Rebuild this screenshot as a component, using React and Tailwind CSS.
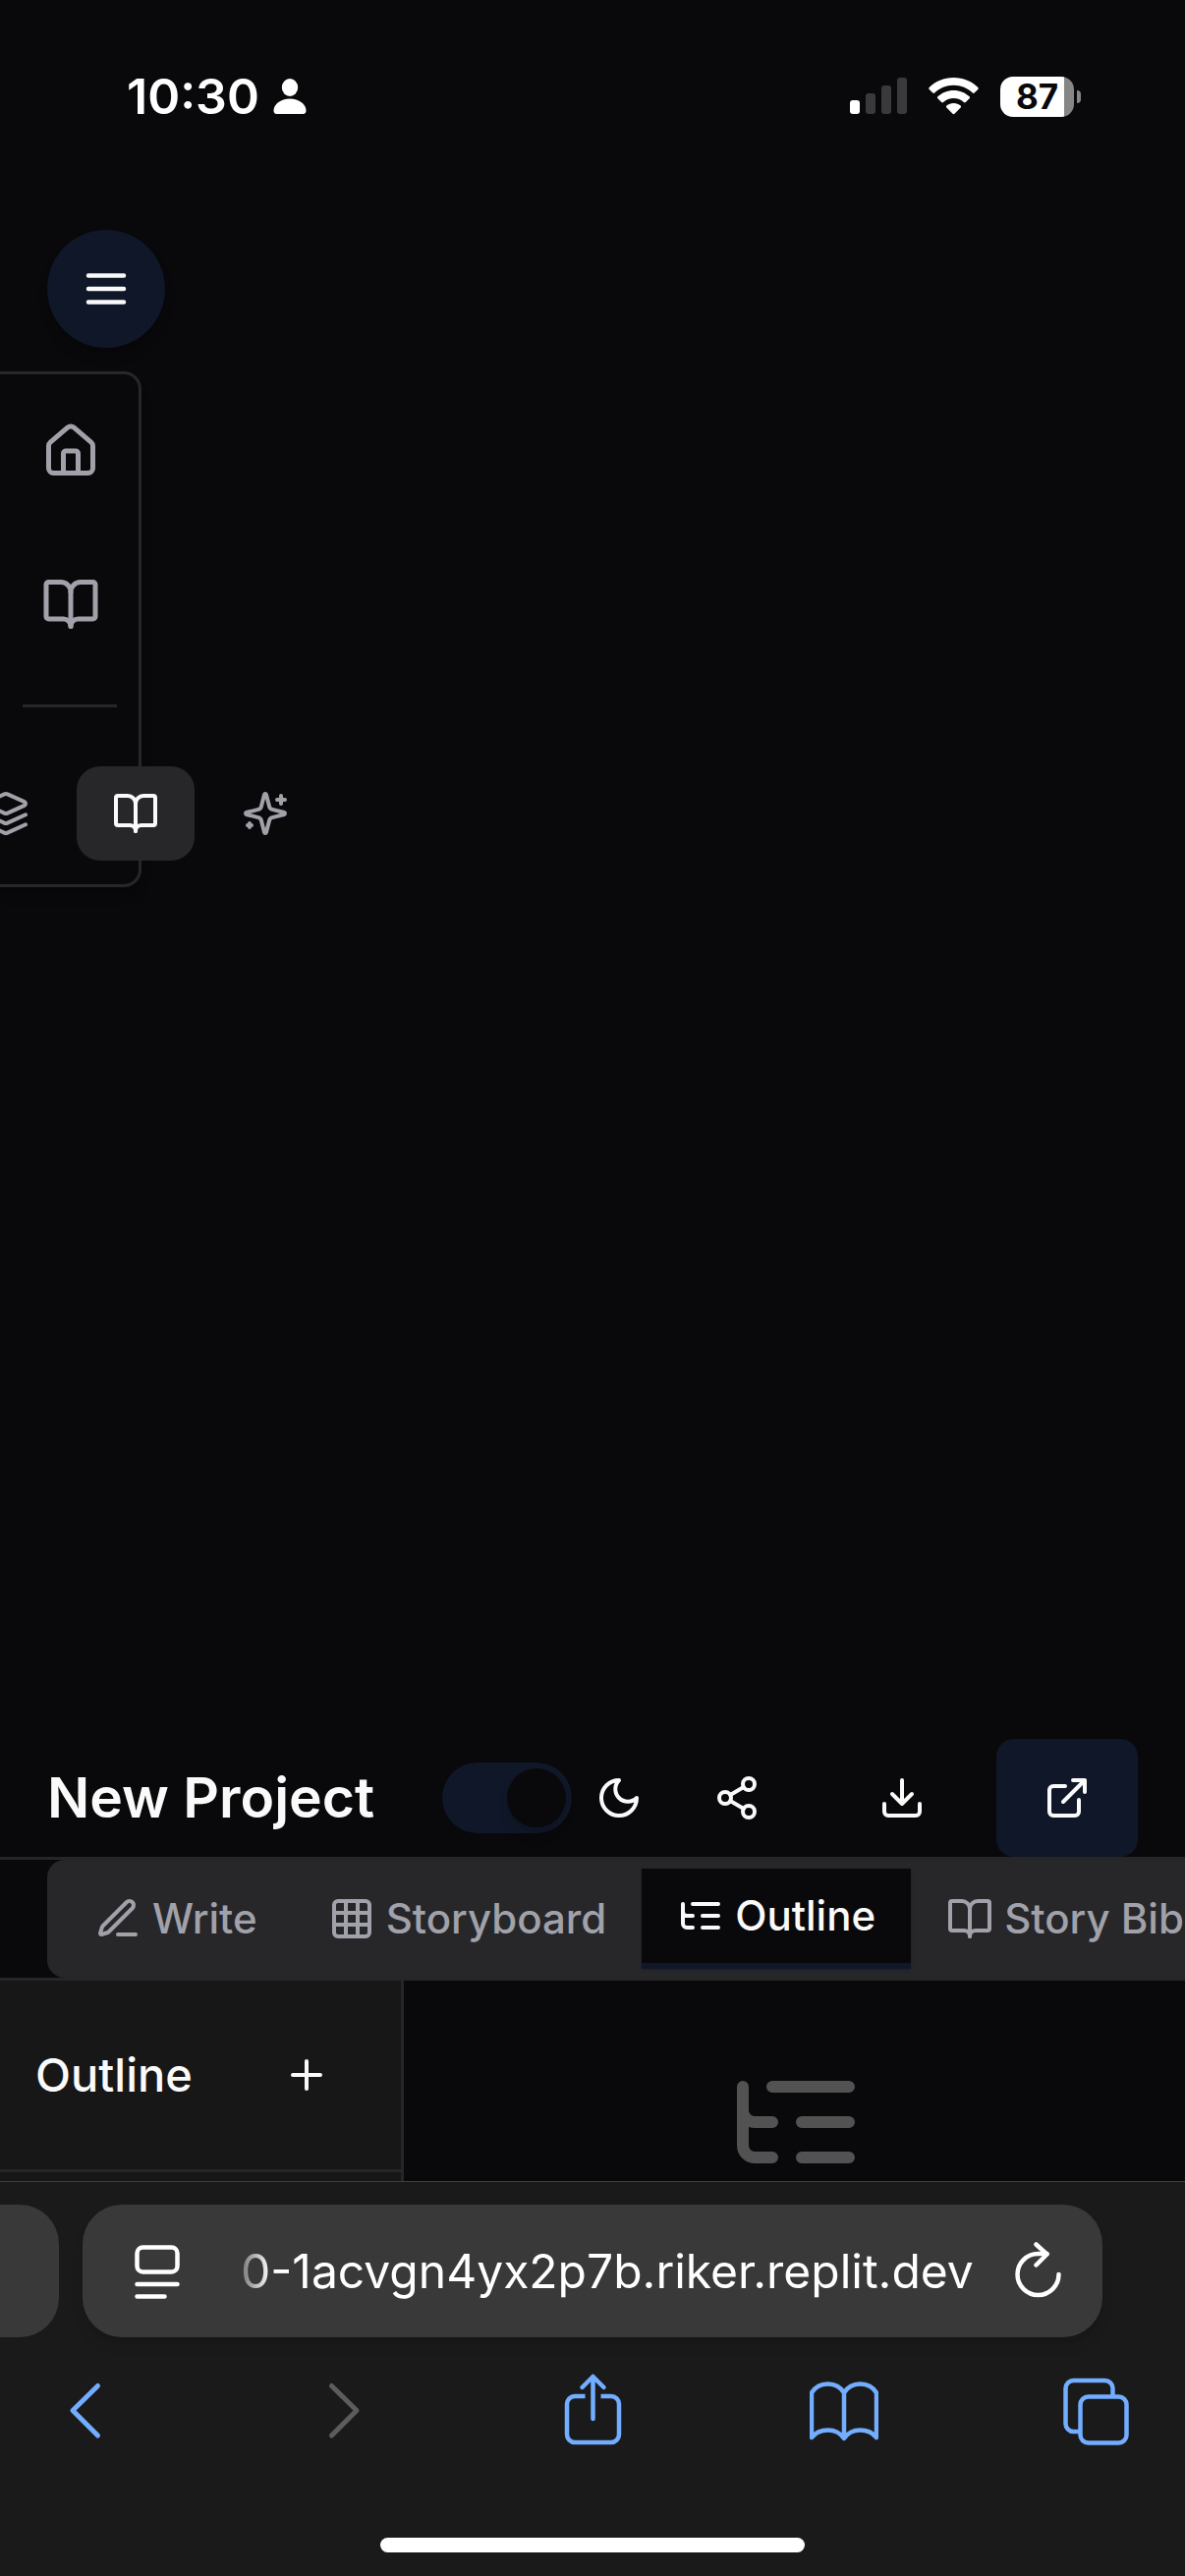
import React from "react";

function Icon({ className, children }) {
  return (
    <svg
      viewBox="0 0 24 24"
      fill="none"
      stroke="currentColor"
      strokeWidth="2"
      strokeLinecap="round"
      strokeLinejoin="round"
      aria-hidden="true"
      className={`shrink-0 ${className}`}
    >
      {children}
    </svg>
  );
}

const BookOpen = ({ className }) => (
  <Icon className={className}>
    <path d="M12 7v14" />
    <path d="M3 18a1 1 0 0 1-1-1V4a1 1 0 0 1 1-1h5a4 4 0 0 1 4 4 4 4 0 0 1 4-4h5a1 1 0 0 1 1 1v13a1 1 0 0 1-1 1h-6a3 3 0 0 0-3 3 3 3 0 0 0-3-3z" />
  </Icon>
);

const ListTree = ({ className }) => (
  <Icon className={className}>
    <path d="M21 12h-8M21 6H8M21 18h-8M3 6v4c0 1.1.9 2 2 2h3M3 10v6c0 1.1.9 2 2 2h3" />
  </Icon>
);

function StatusBar() {
  return (
    <div className="flex h-[196px] items-start justify-between pl-[129px] pr-[106px] pt-[66px]">
      <div className="flex h-16 items-center gap-[14px]">
        <span className="text-[50px] font-semibold leading-[64px] text-white">10:30</span>
        <svg viewBox="0 0 34 36" className="h-9 w-[34px]" fill="#fff" aria-hidden="true">
          <ellipse cx="17" cy="9" rx="8.2" ry="9" />
          <path d="M17 20.5c9.500 0 16.500 6 16.500 12 0 2-1 3.500-3 3.500H3.500c-2 0-3-1.500-3-3.500 0-6 7-12 16.500-12z" />
        </svg>
      </div>
      <div className="flex h-16 items-center gap-[22px]">
        <svg viewBox="0 0 58 38" className="h-[38px] w-[58px]" aria-hidden="true">
          <rect x="0" y="23" width="10" height="14" rx="3" fill="#fff" />
          <rect x="16" y="16" width="10" height="21" rx="3" fill="#3a3a3c" />
          <rect x="32" y="8" width="10" height="29" rx="3" fill="#3a3a3c" />
          <rect x="48" y="0" width="10" height="37" rx="3" fill="#3a3a3c" />
        </svg>
        <svg viewBox="0 0 51 38" className="h-[38px] w-[51px]" fill="#fff" aria-hidden="true">
          <path d="M25.500 0C15.700 0 7 3.800.7 9.900c-.6.600-.6 1.400 0 2l3.600 3.600c.5.500 1.400.5 1.900 0C11.300 10.700 18 7.800 25.500 7.800s14.200 2.900 19.300 7.700c.5.500 1.400.5 1.900 0l3.600-3.600c.6-.6.600-1.400 0-2C44 3.800 35.300 0 25.500 0z" />
          <path d="M25.500 13c-6.200 0-11.900 2.400-16.100 6.300-.6.500-.6 1.400 0 2l3.800 3.700c.5.500 1.300.5 1.900 0 2.800-2.500 6.400-4 10.400-4s7.600 1.500 10.400 4c.6.500 1.400.5 1.900 0l3.800-3.700c.6-.6.600-1.500 0-2C37.400 15.400 31.700 13 25.500 13z" />
          <path d="M25.500 26c-2.700 0-5.200 1-7.100 2.600-.6.500-.6 1.300-.1 1.900l6.200 6.200c.6.600 1.400.6 2 0l6.200-6.200c.5-.6.500-1.400-.1-1.900C30.700 27 28.200 26 25.500 26z" />
        </svg>
        <div className="flex items-center gap-[3px]">
          <div className="flex h-[41px] w-[75px] items-center justify-center rounded-[13px] bg-[linear-gradient(to_right,#fff_65px,#868686_65px)]">
            <span className="text-[35px] font-bold leading-10 text-[#09090b]">87</span>
          </div>
          <div className="h-[13px] w-1 rounded-r-full bg-[#868686]" />
        </div>
      </div>
    </div>
  );
}

function SideDock() {
  return (
    <nav
      aria-label="Project"
      className="flex h-[525px] w-36 flex-col items-start rounded-r-[18px] border-y-[3px] border-r-[3px] border-[#27272a] pt-[18px] shadow-lg"
    >
      <button aria-label="Home" className="flex h-[120px] w-36 items-center justify-center text-[#a1a1aa]">
        <Icon className="size-[60px]">
          <path d="M15 21v-8a1 1 0 0 0-1-1h-4a1 1 0 0 0-1 1v8" />
          <path d="M3 10a2 2 0 0 1 .709-1.528l7-5.999a2 2 0 0 1 2.582 0l7 5.999A2 2 0 0 1 21 10v9a2 2 0 0 1-2 2H5a2 2 0 0 1-2-2z" />
        </Icon>
      </button>
      <button aria-label="Library" className="mt-9 flex h-[120px] w-36 items-center justify-center text-[#a1a1aa]">
        <BookOpen className="size-[60px]" />
      </button>
      <hr className="mt-[42px] w-24 self-center border-t-[3px] border-[#27272a]" />
      <div className="-ml-[54px] mt-[60px] flex gap-3">
        <button aria-label="Layers" className="flex h-24 w-[120px] items-center justify-center rounded-3xl text-[#a1a1aa]">
          <Icon className="size-12">
            <path d="m12.830 2.180a2 2 0 0 0-1.660 0L2.600 6.080a1 1 0 0 0 0 1.830l8.580 3.910a2 2 0 0 0 1.660 0l8.580-3.900a1 1 0 0 0 0-1.830Z" />
            <path d="m22 17.650-9.170 4.160a2 2 0 0 1-1.660 0L2 17.650" />
            <path d="m22 12.650-9.170 4.160a2 2 0 0 1-1.660 0L2 12.650" />
          </Icon>
        </button>
        <button
          aria-label="Story"
          aria-pressed="true"
          className="flex h-24 w-[120px] items-center justify-center rounded-3xl bg-[#27272a] text-[#fafafa]"
        >
          <BookOpen className="size-12" />
        </button>
        <button aria-label="Assistant" className="flex h-24 w-[120px] items-center justify-center rounded-3xl text-[#a1a1aa]">
          <Icon className="size-12">
            <path d="M9.937 15.500A2 2 0 0 0 8.500 14.063l-6.135-1.582a.5.500 0 0 1 0-.962L8.500 9.936A2 2 0 0 0 9.937 8.500l1.582-6.135a.5.500 0 0 1 .963 0L14.063 8.500A2 2 0 0 0 15.500 9.937l6.135 1.581a.5.500 0 0 1 0 .964L15.500 14.063a2 2 0 0 0-1.437 1.437l-1.582 6.135a.5.500 0 0 1-.963 0z" />
            <path d="M20 3v4M22 5h-4M4 17v2M5 18H3" />
          </Icon>
        </button>
      </div>
    </nav>
  );
}

function ProjectHeader() {
  return (
    <header className="flex h-[123px] items-start justify-between border-b-[3px] border-[#262626] px-12">
      <h1 className="flex h-[120px] items-center whitespace-nowrap text-[57px] font-semibold leading-[84px] text-[#fafafa]">
        New Project
      </h1>
      <div className="flex h-[120px] items-center text-[#fafafa]">
        <label className="flex items-center gap-6">
          <input
            type="checkbox"
            role="switch"
            aria-label="Dark mode"
            defaultChecked
            className="flex h-[72px] w-[132px] shrink-0 appearance-none items-center rounded-full bg-[#101728] px-[6px] before:size-[60px] before:rounded-full before:bg-[#09090b] before:shadow-lg before:content-[''] checked:justify-end"
          />
          <Icon className="size-12">
            <path d="M12 3a6 6 0 0 0 9 9 9 9 0 1 1-9-9Z" />
          </Icon>
        </label>
        <button aria-label="Share" className="ml-6 flex h-[120px] w-36 items-center justify-center">
          <Icon className="size-12">
            <circle cx="18" cy="5" r="3" />
            <circle cx="6" cy="12" r="3" />
            <circle cx="18" cy="19" r="3" />
            <path d="m8.590 13.510 6.830 3.980M15.410 6.510l-6.820 3.980" />
          </Icon>
        </button>
        <button aria-label="Download" className="ml-6 flex h-[120px] w-36 items-center justify-center">
          <Icon className="size-12">
            <path d="M21 15v4a2 2 0 0 1-2 2H5a2 2 0 0 1-2-2v-4M7 10l5 5 5-5M12 15V3" />
          </Icon>
        </button>
        <button
          aria-label="Open in new window"
          className="ml-6 flex h-[120px] w-36 items-center justify-center rounded-[18px] bg-[#101728]"
        >
          <Icon className="size-12">
            <path d="M15 3h6v6M10 14 21 3M18 13v6a2 2 0 0 1-2 2H5a2 2 0 0 1-2-2V8a2 2 0 0 1 2-2h6" />
          </Icon>
        </button>
      </div>
    </header>
  );
}

function Tab({ label, active, children }) {
  return (
    <button
      role="tab"
      aria-selected={active ? "true" : "false"}
      className={
        active
          ? "flex h-[102px] shrink-0 items-center gap-[11px] whitespace-nowrap border-b-[6px] border-[#101728] bg-[#09090b] px-9 text-[#fafafa] shadow-sm"
          : "flex h-[102px] shrink-0 items-center gap-[11px] whitespace-nowrap px-9 text-[#a1a1aa]"
      }
    >
      {children}
      <span>{label}</span>
    </button>
  );
}

function Tabs() {
  return (
    <div className="overflow-hidden border-b-[3px] border-[#262626] pl-12">
      <div
        role="tablist"
        className="flex h-[120px] items-center rounded-l-[18px] bg-[#27272a] pl-3 text-[42px] font-medium leading-[60px]"
      >
        <Tab label="Write">
          <Icon className="size-12">
            <path d="M12 20h9" />
            <path d="M16.376 3.622a1 1 0 0 1 3.002 3.002L7.368 18.635a2 2 0 0 1-.855.506l-2.872.838a.5.500 0 0 1-.62-.62l.838-2.872a2 2 0 0 1 .506-.854z" />
          </Icon>
        </Tab>
        <Tab label="Storyboard">
          <Icon className="size-12">
            <rect width="18" height="18" x="3" y="3" rx="2" />
            <path d="M3 9h18M3 15h18M9 3v18M15 3v18" />
          </Icon>
        </Tab>
        <Tab label="Outline" active>
          <ListTree className="size-12" />
        </Tab>
        <Tab label="Story Bible">
          <BookOpen className="size-12" />
        </Tab>
      </div>
    </div>
  );
}

function Workspace() {
  return (
    <div className="flex h-[204px] overflow-hidden">
      <aside className="w-[411px] shrink-0 border-r-[3px] border-[#262626] bg-[#171717]">
        <div className="flex h-[195px] items-center justify-between border-b-[3px] border-[#262626] px-9">
          <h2 className="text-[47px] font-medium leading-[72px] text-[#fafafa]">Outline</h2>
          <button aria-label="Add item" className="flex h-[108px] w-[120px] items-center justify-center text-[#fafafa]">
            <Icon className="size-12">
              <path d="M5 12h14M12 5v14" />
            </Icon>
          </button>
        </div>
      </aside>
      <main className="flex flex-1 justify-center pl-[3px] pt-[72px] text-[#525252]">
        <ListTree className="size-36" />
      </main>
    </div>
  );
}

function BrowserBar() {
  const line = {
    fill: "none",
    stroke: "currentColor",
    strokeWidth: 4.5,
    strokeLinecap: "round",
    strokeLinejoin: "round",
    "aria-hidden": true,
  };
  return (
    <footer className="border-t border-[#3f3f3f] bg-[#1a1a1a] pt-[23px]">
      <div className="flex gap-6 pr-[84px]">
        <div className="h-[135px] w-[60px] shrink-0 rounded-r-[40px] bg-[#393939]" />
        <div className="flex h-[135px] min-w-0 flex-1 items-center rounded-[40px] bg-[#393939] pl-[53px] pr-10 text-white shadow-lg">
          <button aria-label="Page menu" className="shrink-0">
            <svg viewBox="0 0 46 56" className="h-14 w-[46px]" {...line}>
              <rect x="2.500" y="3.500" width="41" height="25" rx="6" />
              <path d="M2.500 41h41M2.500 53.500h28" />
            </svg>
          </button>
          <input
            aria-label="Address"
            readOnly
            defaultValue="0-1acvgn4yx2p7b.riker.replit.dev"
            className="ml-[62px] min-w-0 flex-1 bg-transparent text-[48px] leading-[68px] text-white outline-none [mask-image:linear-gradient(to_right,rgba(0,0,0,0.3),black_30px)]"
          />
          <button aria-label="Reload" className="shrink-0">
            <svg viewBox="0 0 50 60" className="h-[60px] w-[50px]" {...line}>
              <path d="M45.500 33a21 21 0 1 1-21-21h9" />
              <path d="M22.500 2.500l11 10-11 11" />
            </svg>
          </button>
        </div>
      </div>
      <div className="flex items-start justify-between pl-[52px] pr-[55px] pt-9 text-[#72adff]">
        <button aria-label="Back">
          <svg viewBox="0 0 70 76" className="h-[76px] w-[70px]" {...line} strokeWidth="5">
            <path d="M47.500 13.500L22 38.500l25.500 25.500" />
          </svg>
        </button>
        <button aria-label="Forward" disabled className="text-[#5c5c5c]">
          <svg viewBox="0 0 70 76" className="h-[76px] w-[70px]" {...line} strokeWidth="5">
            <path d="M28.500 13.500L54 38.500 28.500 64" />
          </svg>
        </button>
        <button aria-label="Share page">
          <svg viewBox="0 0 70 76" className="h-[76px] w-[70px]" {...line}>
            <path d="M28.500 24H18a8 8 0 0 0-8 8v31a8 8 0 0 0 8 8h37a8 8 0 0 0 8-8V32a8 8 0 0 0-8-8H44.500" strokeLinecap="butt" />
            <path d="M36.500 47V4M25.500 15L36.500 4l11 11" />
          </svg>
        </button>
        <button aria-label="Bookmarks">
          <svg viewBox="0 0 70 76" className="h-[76px] w-[70px]" {...line}>
            <path d="M35 20.500C31 14 25 11.500 18.500 11.500S6 14 2 20.500V66c4-5 10-7.500 16.500-7.500S31 61 35 67c4-6 10-8.500 16.500-8.500S64 61 68 66V20.500c-4-6.500-10-9-16.500-9S39 14 35 20.500zV66" />
          </svg>
        </button>
        <button aria-label="Tabs">
          <svg viewBox="0 0 70 76" className="h-[76px] w-[70px]" {...line}>
            <path d="M17 60H11.500a8 8 0 0 1-8-8V16a8 8 0 0 1 8-8h32a8 8 0 0 1 8 8v7" strokeLinecap="butt" />
            <rect x="18.500" y="24.500" width="47" height="47" rx="8" />
          </svg>
        </button>
      </div>
      <div className="mx-auto mb-6 mt-[92px] h-[15px] w-[432px] rounded-full bg-white" />
    </footer>
  );
}

export default function App() {
  return (
    <div className="flex min-h-screen flex-col overflow-hidden bg-[#09090b] font-['Inter',sans-serif]">
      <StatusBar />
      <div className="px-12 pb-6 pt-[38px]">
        <button
          aria-label="Open menu"
          className="flex size-[120px] items-center justify-center rounded-full bg-[#101728] text-[#fafafa] shadow-lg"
        >
          <Icon className="size-[54px]">
            <path d="M4 6h16M4 12h16M4 18h16" />
          </Icon>
        </button>
      </div>
      <SideDock />
      <div className="flex-1" />
      <ProjectHeader />
      <Tabs />
      <Workspace />
      <BrowserBar />
    </div>
  );
}
